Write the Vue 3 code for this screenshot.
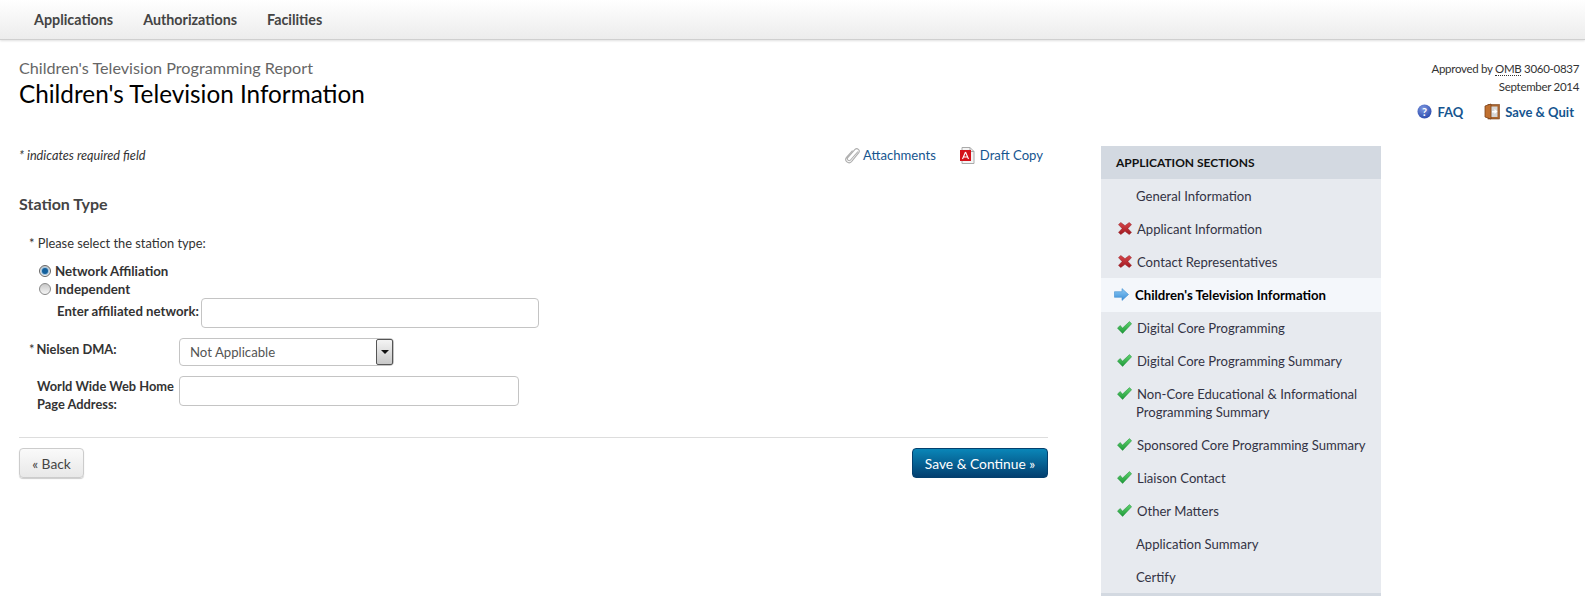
<script setup>
const sections = [
  { label: 'General Information', icon: '' },
  { label: 'Applicant Information', icon: 'x' },
  { label: 'Contact Representatives', icon: 'x' },
  { label: "Children's Television Information", icon: 'arrow', active: true },
  { label: 'Digital Core Programming', icon: 'check' },
  { label: 'Digital Core Programming Summary', icon: 'check' },
  { label: 'Non-Core Educational & Informational Programming Summary', icon: 'check' },
  { label: 'Sponsored Core Programming Summary', icon: 'check' },
  { label: 'Liaison Contact', icon: 'check' },
  { label: 'Other Matters', icon: 'check' },
  { label: 'Application Summary', icon: '' },
  { label: 'Certify', icon: '' }
]
</script>

<template>
  <div class="page">
    <svg class="defs" width="0" height="0">
      <defs>
        <linearGradient id="gx" x1="0" y1="0" x2="0" y2="1"><stop offset="0" stop-color="#d8464a"/><stop offset="1" stop-color="#a01820"/></linearGradient>
        <linearGradient id="gc" x1="0" y1="0" x2="0" y2="1"><stop offset="0" stop-color="#5fd36d"/><stop offset="1" stop-color="#1f9a3a"/></linearGradient>
        <linearGradient id="ga" x1="0" y1="0" x2="0" y2="1"><stop offset="0" stop-color="#8ccaf5"/><stop offset="1" stop-color="#3c8fd8"/></linearGradient>
        <radialGradient id="q" cx="0.4" cy="0.3" r="0.8"><stop offset="0" stop-color="#7d97e0"/><stop offset="1" stop-color="#2343a8"/></radialGradient>
      </defs>
    </svg>
    <nav class="nav">
      <a>Applications</a>
      <a>Authorizations</a>
      <a>Facilities</a>
    </nav>

    <header class="head">
      <div>
        <div class="sub">Children's Television Programming Report</div>
        <h1>Children's Television Information</h1>
      </div>
      <div class="meta">
        <div class="approved">Approved by <abbr>OMB</abbr> 3060-0837</div>
        <div class="approved">September 2014</div>
        <div class="tools">
          <a class="tool">
            <svg width="15" height="15" viewBox="0 0 15 15"><circle cx="7.5" cy="7.5" r="7" fill="url(#q)"/><text x="7.5" y="11.5" text-anchor="middle" class="qmark">?</text></svg>
            FAQ
          </a>
          <a class="tool">
            <svg width="16" height="17" viewBox="0 0 16 17"><rect x="4" y="1.5" width="11.5" height="14.5" fill="#a9652f" stroke="#7c431b" stroke-width=".6"/><rect x="7" y="3.5" width="6.5" height="10.5" fill="#d6d6d6"/><path d="M1 3 L7 1 V16 L1 14 Z" fill="#c0702f" stroke="#7c431b" stroke-width="0.8"/><path d="M8 8h2.500V6l3 2.500-3 2.500V9.500H8z" fill="#fff"/></svg>
            Save &amp; Quit
          </a>
        </div>
      </div>
    </header>

    <div class="body">
      <main class="main">
        <div class="toprow">
          <em class="req">* indicates required field</em>
          <div class="links">
            <a class="link clip">
              <svg width="15" height="17" viewBox="0 0 15 17"><path d="M13 4.500 L5.500 13 a1.800 1.800 0 0 1 -2.700 -2.400 L10 2.400 a2.500 2.500 0 0 1 3.800 3.200 L6.500 14.600 a3.300 3.300 0 0 1 -5 -4.300 L7.500 3.500" fill="none" stroke="#aeaeae" stroke-width="1.1"/></svg>
              Attachments
            </a>
            <a class="link">
              <svg width="16" height="17" viewBox="0 0 16 17"><path d="M3 .5h8l4 4v12H3z" fill="#f4f4f4" stroke="#aaa"/><path d="M11 .5v4h4" fill="none" stroke="#aaa"/><rect x="1" y="3" width="11" height="11" fill="#d4121a"/><path d="M6.500 5 L9.500 12 M6.500 5 L3.500 12 M4.500 10 H9" stroke="#fff" stroke-width="1.1" fill="none"/></svg>
              Draft Copy
            </a>
          </div>
        </div>

        <h2>Station Type</h2>
        <div class="prompt">* Please select the station type:</div>

        <div class="radios">
          <label class="radio"><span class="dot on"></span>Network Affiliation</label>
          <label class="radio"><span class="dot"></span>Independent</label>
        </div>
        <div class="affil">
          <label>Enter affiliated network:</label>
          <input class="text affil-input" type="text" />
        </div>

        <div class="field dma">
          <label class="flabel"><span class="star">*</span>Nielsen DMA:</label>
          <div class="select">
            <span class="sel-text">Not Applicable</span>
            <span class="sel-btn"><i></i></span>
          </div>
        </div>
        <div class="field web">
          <label class="flabel indent">World Wide Web Home Page Address:</label>
          <input class="text web-input" type="text" />
        </div>

        <hr />
        <div class="actions">
          <button class="btn back">« Back</button>
          <button class="btn save">Save &amp; Continue »</button>
        </div>
      </main>

      <aside class="side">
        <div class="side-head">APPLICATION SECTIONS</div>
        <ul>
          <li v-for="s in sections" :key="s.label" :class="{ active: s.active, plain: !s.icon }">
            <span v-if="s.icon" class="ico">
              <svg v-if="s.icon === 'x'" width="14" height="13" viewBox="0 0 14 13"><path d="M2.800 .5 7 3.700 11.200 .5 13.500 2.600 9.900 6.500 13.500 10.400 11.200 12.500 7 9.300 2.800 12.500 .5 10.400 4.100 6.500 .5 2.600Z" fill="url(#gx)" stroke="#8f1a20" stroke-width=".5"/></svg>
              <svg v-else-if="s.icon === 'check'" width="15" height="13" viewBox="0 0 15 13"><path d="M.5 7.200 3 4.500 5.600 7 12.500 .6 14.600 2.800 5.600 12.400Z" fill="url(#gc)" stroke="#1e8a36" stroke-width=".5"/></svg>
              <svg v-else width="15" height="13" viewBox="0 0 15 13"><path d="M.5 3.700H8V.6L14.500 6.500 8 12.400V9.300H.5Z" fill="url(#ga)" stroke="#3f8fd2" stroke-width=".6"/></svg>
            </span>
            <span class="lbl">{{ s.label }}</span>
          </li>
        </ul>
      </aside>
    </div>
  </div>
</template>

<style>
html, body { margin: 0; background: #fff; }
</style>

<style scoped>
.page { font-family: Lato, "Liberation Sans", sans-serif; font-size: 12.85px; color: #333; height: 612px; overflow: hidden; }
.defs { position: absolute; }
.nav { height: 39px; display: flex; align-items: center; gap: 30px; padding-left: 34px; background: linear-gradient(#fff, #ececec); border-bottom: 1px solid #cfcfcf; box-shadow: 0 1px 2px rgba(0,0,0,.12); font-size: 14.3px; font-weight: 700; color: #444; }
.head { display: flex; justify-content: space-between; padding: 18px 6px 0 19px; height: 88px; }
.sub { font-size: 16.2px; line-height: 19px; color: #666; }
h1 { margin: 2px 0 0; font-size: 24.3px; line-height: 30px; font-weight: 400; color: #000; }
.meta { text-align: right; padding-top: 2px; }
.approved { font-size: 11.5px; letter-spacing: -0.3px; line-height: 18px; color: #333; }
abbr { border-bottom: 1px dotted #333; }
.tools { display: flex; justify-content: flex-end; gap: 21px; margin-top: 7px; padding-right: 5px; }
.tool { display: flex; align-items: center; gap: 5px; font-size: 13px; font-weight: 700; color: #16558f; }
.qmark { font-size: 11px; font-weight: 700; fill: #fff; font-family: Lato, sans-serif; }
.body { display: flex; align-items: flex-start; }
.main { width: 1029px; margin-left: 19px; }
.toprow { display: flex; justify-content: space-between; align-items: center; height: 18px; padding-right: 5px; }
.req { font-size: 12.7px; color: #333; }
.links { display: flex; gap: 23px; }
.link { display: flex; align-items: center; gap: 5px; font-size: 13.1px; color: #16558f; }
.clip { gap: 3px; }
h2 { margin: 30px 0 0; font-size: 16px; line-height: 20px; font-weight: 700; color: #444; }
.prompt { margin: 20px 0 0 10px; line-height: 18px; }
.radios { margin: 10px 0 0 20px; }
.radio { display: flex; align-items: center; gap: 4px; font-weight: 700; font-size: 13.3px; line-height: 18px; }
.dot { width: 12px; height: 12px; box-sizing: border-box; border-radius: 50%; border: 1px solid #8a8a8a; background: linear-gradient(#c8c8c8, #f5f5f5); display: flex; align-items: center; justify-content: center; }
.dot.on { border-color: #666; }
.dot.on::after { content: ""; width: 6px; height: 6px; border-radius: 50%; background: #14609c; box-shadow: 0 0 0 1px #9fc3dd; }
.affil { display: flex; align-items: center; margin: 0 0 0 38px; font-weight: 700; font-size: 13.2px; height: 30px; }
.affil label { padding-bottom: 5px; }
.text { box-sizing: border-box; height: 30px; border: 1px solid #c4c4c4; border-radius: 4px; background: #fff; padding: 0; margin: 0; outline: none; }
.affil-input { width: 338px; margin-left: 2px; }
.field { display: flex; margin-left: 10px; }
.dma { margin-top: 10px; }
.web { margin-top: 10px; }
.flabel { width: 150px; font-weight: 700; line-height: 18px; padding-top: 2px; box-sizing: border-box; padding-right: 10px; }
.flabel.indent { padding-left: 8px; padding-right: 2px; padding-top: 0; margin-top: 1px; }
.star { font-weight: 400; margin-right: 2px; }
.select { box-sizing: border-box; width: 215px; height: 28px; border: 1px solid #c4c4c4; border-radius: 4px; display: flex; align-items: center; justify-content: space-between; background: #fff; }
.sel-text { padding-left: 10px; font-size: 13.2px; color: #555; }
.sel-btn { box-sizing: border-box; width: 17px; height: 26px; border: 1px solid #555; border-radius: 2px; background: linear-gradient(#f4f4f4, #c8c8c8); display: flex; align-items: center; justify-content: center; }
.sel-btn i { width: 0; height: 0; border: 4px solid transparent; border-top: 4px solid #111; border-bottom: 0; }
.web-input { width: 340px; }
hr { border: 0; border-top: 1px solid #ddd; margin: 24px 0 0; }
.actions { display: flex; justify-content: space-between; margin-top: 10px; }
.btn { box-sizing: border-box; height: 30px; font-family: inherit; font-size: 13.8px; border-radius: 4px; padding: 0; }
.back { width: 65px; color: #444; border: 1px solid #ccc; background: linear-gradient(#fafafa, #e8e8e8); box-shadow: 0 1px 1px rgba(0,0,0,.2); }
.save { width: 136px; color: #fff; border: 1px solid #04406e; background: linear-gradient(#0a86b8, #033f70); }
.side { width: 280px; margin-left: 53px; background: #e7eaef; border-bottom: 3px solid #d3d9e1; }
.side-head { height: 33px; line-height: 33px; padding-left: 15px; background: #d3d9e1; font-size: 12px; font-weight: 700; color: #111; }
ul { list-style: none; margin: 0; padding: 0; }
li { position: relative; padding: 8px 0 7px 35px; line-height: 18px; color: #334; font-size: 13.1px; text-indent: 1px; }
li.plain { text-indent: 0; }
li.active { background: #f4f7fb; font-weight: 700; font-size: 13.2px; color: #000; padding-left: 34px; padding-top: 8px; padding-bottom: 8px; text-indent: 0; }
li.active + li { padding-top: 7px; }
li.active + li .ico { top: 8px; }
.ico { position: absolute; left: 16px; top: 9px; width: 15px; height: 15px; display: flex; align-items: center; justify-content: center; }
.active .ico { left: 13px; }
.lbl { display: block; }
</style>
